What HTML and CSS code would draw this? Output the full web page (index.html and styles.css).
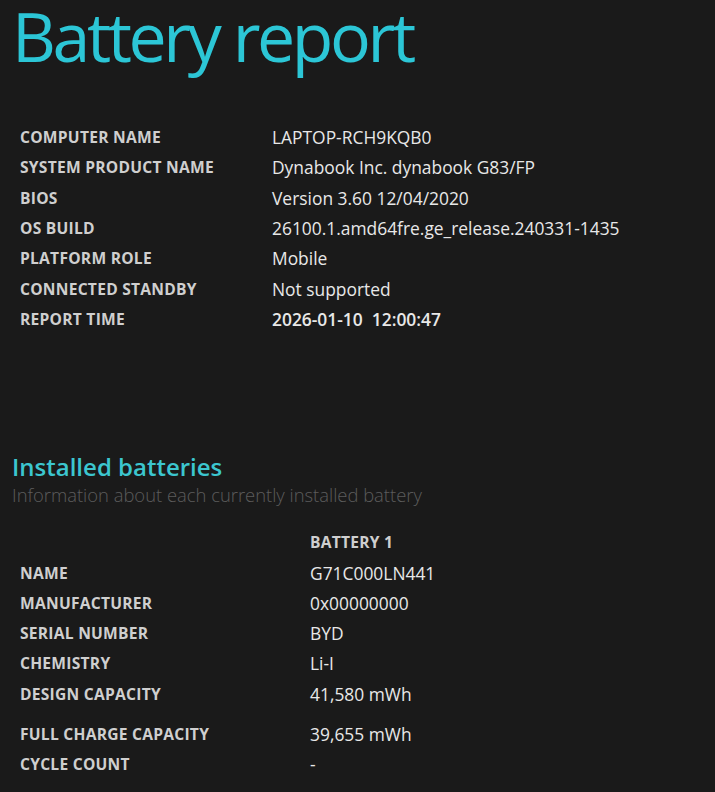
FILE: index.html
```html
<!DOCTYPE html>
<html>
<head>
<meta charset="utf-8">
<link rel="stylesheet" href="styles.css">
<title>Battery report</title>
</head>
<body>
<h1 class="title">Battery report</h1>
<div class="info">
  <div class="row"><span class="label">COMPUTER NAME</span><span class="value">LAPTOP-RCH9KQB0</span></div>
  <div class="row"><span class="label">SYSTEM PRODUCT NAME</span><span class="value">Dynabook Inc. dynabook G83/FP</span></div>
  <div class="row"><span class="label">BIOS</span><span class="value">Version 3.60 12/04/2020</span></div>
  <div class="row"><span class="label">OS BUILD</span><span class="value">26100.1.amd64fre.ge_release.240331-1435</span></div>
  <div class="row"><span class="label">PLATFORM ROLE</span><span class="value">Mobile</span></div>
  <div class="row"><span class="label">CONNECTED STANDBY</span><span class="value">Not supported</span></div>
  <div class="row"><span class="label">REPORT TIME</span><span class="value strong">2026-01-10&nbsp;&nbsp;12:00:47</span></div>
</div>
<h2 class="section-title">Installed batteries</h2>
<p class="section-sub">Information about each currently installed battery</p>
<div class="batteries">
  <div class="row head"><span class="label"></span><span class="label">BATTERY 1</span></div>
  <div class="row"><span class="label">NAME</span><span class="value">G71C000LN441</span></div>
  <div class="row"><span class="label">MANUFACTURER</span><span class="value">0x00000000</span></div>
  <div class="row"><span class="label">SERIAL NUMBER</span><span class="value">BYD</span></div>
  <div class="row"><span class="label">CHEMISTRY</span><span class="value">Li-I</span></div>
  <div class="row"><span class="label">DESIGN CAPACITY</span><span class="value">41,580 mWh</span></div>
  <div class="row gap"><span class="label">FULL CHARGE CAPACITY</span><span class="value">39,655 mWh</span></div>
  <div class="row"><span class="label">CYCLE COUNT</span><span class="value">-</span></div>
</div>
</body>
</html>
```
FILE: styles.css
```css
html, body {
  background: #1a1a1a;
}
body {
  margin: 0;
  padding: 0 12px;
  font-family: "Open Sans", "Noto Sans", sans-serif;
  color: #e6e6e6;
}
.title {
  margin: 0;
  font-size: 68px;
  font-weight: 400;
  line-height: 72px;
  color: #2cc6d6;
  letter-spacing: -3.4px;
}
.info {
  margin-top: 50px;
  padding-left: 8px;
  display: flex;
  flex-direction: column;
}
.row {
  display: grid;
  grid-template-columns: 252px 1fr;
  align-items: center;
  height: 30.3px;
}
.label {
  font-size: 15.6px;
  font-weight: 700;
  color: #cfcfcf;
  letter-spacing: 0.25px;
}
.value {
  font-size: 17.4px;
  color: #e8e8e8;
}
.value.strong {
  font-weight: 600;
}
.section-title {
  margin: 118px 0 0;
  font-size: 24px;
  font-weight: 600;
  line-height: 30px;
  color: #3cc6cf;
}
.section-sub {
  margin: 0;
  font-size: 18.4px;
  font-weight: 300;
  line-height: 26px;
  color: #5c5c5c;
}
.batteries {
  margin-top: 19px;
  padding-left: 8px;
  display: flex;
  flex-direction: column;
}
.batteries .row {
  grid-template-columns: 290px 1fr;
}
.batteries .row.gap {
  margin-top: 10px;
}
```
